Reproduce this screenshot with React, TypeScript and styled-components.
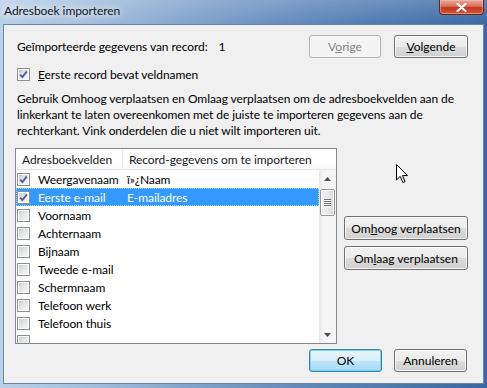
import styled, { createGlobalStyle } from "styled-components";

const GlobalStyle = createGlobalStyle`
  html, body {
    margin: 0;
    padding: 0;
  }
  body {
    width: 487px;
    height: 388px;
    overflow: hidden;
    font-family: "Segoe UI", Lato, "Liberation Sans", sans-serif;
    font-size: 12px;
    letter-spacing: -0.08px;
    color: #000;
  }
`;

type Field = { name: string; source?: string; checked: boolean; selected?: boolean };

// last entry only peeks in at the bottom edge of the list
const fields: Field[] = [
  { name: "Weergavenaam", source: "ï»¿Naam", checked: true },
  { name: "Eerste e-mail", source: "E-mailadres", checked: true, selected: true },
  { name: "Voornaam", checked: false },
  { name: "Achternaam", checked: false },
  { name: "Bijnaam", checked: false },
  { name: "Tweede e-mail", checked: false },
  { name: "Schermnaam", checked: false },
  { name: "Telefoon werk", checked: false },
  { name: "Telefoon thuis", checked: false },
  { name: "", checked: false },
];

const Window = styled.div`
  position: relative;
  width: 487px;
  height: 388px;
  display: flex;
  flex-direction: column;
  background: linear-gradient(90deg, #b9d0e8 0%, #a3bfde 18%, #7fa2cb 40%, #6189bb 62%, #4c77ad 82%, #3a68a2 100%);
`;

const TitleBar = styled.div`
  height: 24px;
  display: flex;
  align-items: flex-start;
  justify-content: space-between;
  padding-left: 4px;
  background: linear-gradient(180deg, rgba(255, 255, 255, 0.18), rgba(255, 255, 255, 0));
`;

const Title = styled.div`
  line-height: 21px;
  font-size: 12px;
  color: #141414;
  text-shadow: 0 0 6px rgba(255, 255, 255, 0.95), 0 0 10px rgba(255, 255, 255, 0.8);
`;

const CloseButton = styled.div`
  width: 45px;
  height: 15px;
  margin-right: 3px;
  box-sizing: border-box;
  border: 1px solid #5e2a22;
  border-top: none;
  border-radius: 0 0 4px 4px;
  background: linear-gradient(180deg, #e9a99a 0%, #d86f5b 45%, #c2351c 55%, #d25a3c 100%);
  box-shadow: inset 0 0 0 1px rgba(255, 200, 190, 0.45);
  display: flex;
  align-items: center;
  justify-content: center;
`;

const Client = styled.div`
  flex: 1;
  margin: 0 3px 4px 3px;
  border: 1px solid #6f86a3;
  background: #f0f0f0;
  padding: 10px 15px 0 11px;
  display: flex;
  flex-direction: column;
`;

const RecordRow = styled.div`
  display: flex;
  align-items: center;
  height: 23px;
  padding-left: 2px;
`;

const RecordLabel = styled.span`
  margin-right: 11px;
`;

const Spacer = styled.div`
  flex: 1;
`;

const Key = styled.span`
  text-decoration: underline;
`;

const Button = styled.button<{ $width: number; $height?: number; $default?: boolean }>`
  width: ${(p) => p.$width}px;
  height: ${(p) => p.$height ?? 23}px;
  padding: 0;
  font: inherit;
  color: #000;
  border-radius: 3px;
  border: 1px solid ${(p) => (p.$default ? "#3c7fb1" : "#707070")};
  background: ${(p) =>
    p.$default
      ? "linear-gradient(180deg, #eaf6fd 0%, #d9f0fc 50%, #bee6fd 51%, #a7d9f5 100%)"
      : "linear-gradient(180deg, #f2f2f2 0%, #ebebeb 50%, #dddddd 51%, #cfcfcf 100%)"};
  box-shadow: inset 0 0 0 1px ${(p) => (p.$default ? "rgba(72, 205, 240, 0.7)" : "rgba(255, 255, 255, 0.75)")};

  &:disabled {
    color: #838383;
    border-color: #adb2b5;
    background: #f4f4f4;
    box-shadow: none;
  }
`;

const NavGap = styled.div`
  width: 13px;
`;

const CheckRow = styled.label`
  display: flex;
  align-items: center;
  gap: 8px;
  height: 16px;
  margin-top: 8px;
  padding-left: 2px;
`;

const Box = styled.span`
  width: 13px;
  height: 13px;
  box-sizing: border-box;
  flex: none;
  border: 1px solid #8e8f8f;
  padding: 1px;
  background: #fff;
  display: inline-flex;
`;

const BoxInner = styled.span`
  flex: 1;
  background: linear-gradient(135deg, #cbcfd5 0%, #e8e9ea 55%, #f6f6f6 100%);
  display: flex;
  align-items: center;
  justify-content: center;
`;

const Help = styled.p`
  margin: 9px 0 0 2px;
  line-height: 16px;
`;

const Main = styled.div`
  display: flex;
  align-items: center;
  gap: 7px;
  margin-top: 9px;
`;

const ListBox = styled.div`
  width: 322px;
  height: 196px;
  box-sizing: border-box;
  border: 1px solid #828790;
  background: #fff;
  display: flex;
  flex-direction: column;
  overflow: hidden;
`;

const Header = styled.div`
  height: 21px;
  flex: none;
  display: grid;
  grid-template-columns: 107px 1fr;
  border-bottom: 1px solid #e5e5e5;
  box-sizing: border-box;
  background: linear-gradient(180deg, #ffffff 0%, #ffffff 60%, #f7f8fa 100%);
`;

const HeaderCell = styled.div<{ $divider?: boolean }>`
  display: flex;
  align-items: center;
  padding-left: 6px;
  color: #1a1a1a;
  border-right: ${(p) => (p.$divider ? "1px solid #e3e8ee" : "none")};
  white-space: nowrap;
  overflow: hidden;
`;

const Body = styled.div`
  flex: 1;
  display: flex;
  min-height: 0;
`;

const Rows = styled.div`
  flex: 1;
  overflow: hidden;
`;

const Row = styled.div<{ $selected?: boolean }>`
  height: 18px;
  display: grid;
  grid-template-columns: 107px 1fr;
  align-items: center;
  box-sizing: border-box;
  background: ${(p) => (p.$selected ? "#3399ff" : "transparent")};
  color: ${(p) => (p.$selected ? "#fff" : "#000")};
  outline: ${(p) => (p.$selected ? "1px dotted #a8d2ff" : "none")};
  outline-offset: -1px;
`;

const NameCell = styled.div`
  display: flex;
  align-items: center;
  gap: 8px;
  padding-left: 1px;
  white-space: nowrap;
`;

const SourceCell = styled.div`
  padding-left: 4px;
  white-space: nowrap;
`;

const ScrollBar = styled.div`
  width: 17px;
  flex: none;
  display: flex;
  flex-direction: column;
  background: linear-gradient(90deg, #e7e7e7 0%, #f5f5f5 25%, #f5f5f5 100%);
`;

const ArrowCell = styled.div`
  height: 17px;
  display: flex;
  align-items: center;
  justify-content: center;
`;

const Track = styled.div`
  flex: 1;
  padding: 2px 1px 0 1px;
`;

const Thumb = styled.div`
  height: 27px;
  box-sizing: border-box;
  border: 1px solid #979797;
  border-radius: 2px;
  background: linear-gradient(90deg, #f1f1f1 0%, #e9e9e9 50%, #d8d8d8 100%);
  box-shadow: inset 0 0 0 1px rgba(255, 255, 255, 0.8);
  display: flex;
  flex-direction: column;
  align-items: center;
  justify-content: center;
  gap: 1px;
`;

const GripLine = styled.span`
  width: 7px;
  height: 1px;
  background: #6f6f6f;
  box-shadow: 0 1px 0 #fff;
`;

const SideButtons = styled.div`
  display: flex;
  flex-direction: column;
  gap: 6px;
  margin-top: -6px;
`;

const Footer = styled.div`
  display: flex;
  justify-content: flex-end;
  gap: 12px;
  margin-top: 5px;
  margin-right: 1px;
`;

const Cursor = styled.svg`
  position: absolute;
  left: 396px;
  top: 164px;
`;

function CheckBox({ checked }: { checked: boolean }) {
  return (
    <Box>
      <BoxInner>
        {checked && (
          <svg width="9" height="9" viewBox="0 0 9 9">
            <path d="M1.2 4.6 L3.4 7 L7.8 1.4" fill="none" stroke="#4a5f97" strokeWidth="1.8" />
          </svg>
        )}
      </BoxInner>
    </Box>
  );
}

export default function App() {
  return (
    <>
      <GlobalStyle />
      <Window>
        <TitleBar>
          <Title>Adresboek importeren</Title>
          <CloseButton>
            <svg width="11" height="9" viewBox="0 0 11 9">
              <path d="M1.5 1 L9.5 8 M9.5 1 L1.5 8" stroke="#fff" strokeWidth="2.2" strokeLinecap="round" />
            </svg>
          </CloseButton>
        </TitleBar>
        <Client>
          <RecordRow>
            <RecordLabel>Geïmporteerde gegevens van record:</RecordLabel>
            <span>1</span>
            <Spacer />
            <Button $width={72} disabled>
              V<Key>o</Key>rige
            </Button>
            <NavGap />
            <Button $width={74}>
              <Key>V</Key>olgende
            </Button>
          </RecordRow>
          <CheckRow>
            <CheckBox checked />
            <span>
              <Key>E</Key>erste record bevat veldnamen
            </span>
          </CheckRow>
          <Help>
            Gebruik Omhoog verplaatsen en Omlaag verplaatsen om de adresboekvelden aan de
            <br />
            linkerkant te laten overeenkomen met de juiste te importeren gegevens aan de
            <br />
            rechterkant. Vink onderdelen die u niet wilt importeren uit.
          </Help>
          <Main>
            <ListBox>
              <Header>
                <HeaderCell $divider>Adresboekvelden</HeaderCell>
                <HeaderCell>Record-gegevens om te importeren</HeaderCell>
              </Header>
              <Body>
                <Rows>
                  {fields.map((f, i) => (
                    <Row key={i} $selected={f.selected}>
                      <NameCell>
                        <CheckBox checked={f.checked} />
                        <span>{f.name}</span>
                      </NameCell>
                      <SourceCell>{f.source ?? ""}</SourceCell>
                    </Row>
                  ))}
                </Rows>
                <ScrollBar>
                  <ArrowCell>
                    <svg width="7" height="4" viewBox="0 0 7 4">
                      <path d="M0 4 L3.5 0 L7 4 Z" fill="#4d4d4d" />
                    </svg>
                  </ArrowCell>
                  <Track>
                    <Thumb>
                      <GripLine />
                      <GripLine />
                      <GripLine />
                      <GripLine />
                    </Thumb>
                  </Track>
                  <ArrowCell>
                    <svg width="7" height="4" viewBox="0 0 7 4">
                      <path d="M0 0 L7 0 L3.5 4 Z" fill="#4d4d4d" />
                    </svg>
                  </ArrowCell>
                </ScrollBar>
              </Body>
            </ListBox>
            <SideButtons>
              <Button $width={124} $height={24}>
                Om<Key>h</Key>oog verplaatsen
              </Button>
              <Button $width={124} $height={24}>
                Om<Key>l</Key>aag verplaatsen
              </Button>
            </SideButtons>
          </Main>
          <Footer>
            <Button $width={73} $default>
              OK
            </Button>
            <Button $width={73}>Annuleren</Button>
          </Footer>
        </Client>
        <Cursor width="13" height="20" viewBox="0 0 13 20">
          <path d="M0.5 0.5 L0.5 16 L4.2 12.4 L6.8 18.5 L9 17.6 L6.5 11.6 L11.5 11.6 Z" fill="#fff" stroke="#000" strokeWidth="1" strokeLinejoin="round" />
        </Cursor>
      </Window>
    </>
  );
}
